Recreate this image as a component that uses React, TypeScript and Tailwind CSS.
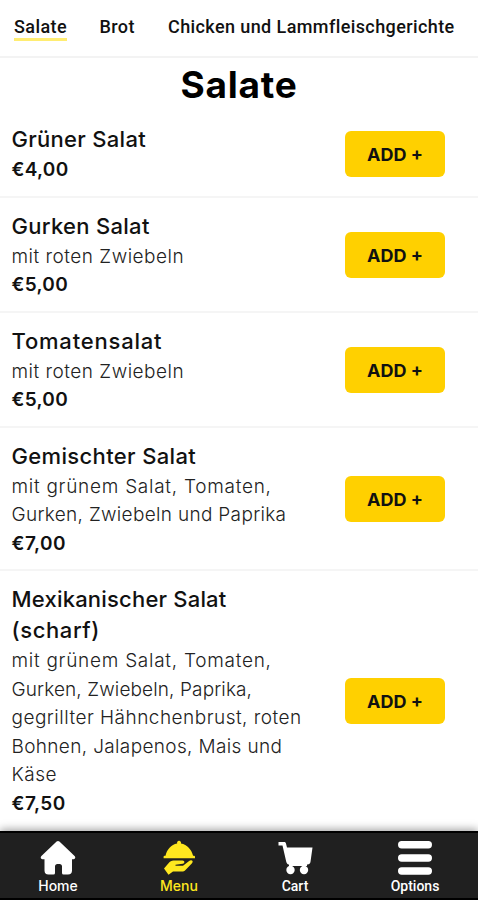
import type { ReactNode } from 'react';
import clsx from 'clsx';

interface Line {
  text: string;
  tracking: string;
}

interface MenuItem {
  name: Line[];
  description: Line[];
  price: Line;
}

const categories = [
  { label: 'Salate', width: 'w-[53px]', active: true },
  { label: 'Brot', width: 'w-[36px]', active: false },
  { label: 'Chicken und Lammfleischgerichte', width: 'w-[288px]', active: false },
];

const items: MenuItem[] = [
  {
    name: [{ text: 'Grüner Salat', tracking: 'tracking-[0.3px]' }],
    description: [],
    price: { text: '€4,00', tracking: 'tracking-[0.3px]' },
  },
  {
    name: [{ text: 'Gurken Salat', tracking: 'tracking-[0.3px]' }],
    description: [{ text: 'mit roten Zwiebeln', tracking: 'tracking-[0.5px]' }],
    price: { text: '€5,00', tracking: 'tracking-[0.3px]' },
  },
  {
    name: [{ text: 'Tomatensalat', tracking: 'tracking-[0.8px]' }],
    description: [{ text: 'mit roten Zwiebeln', tracking: 'tracking-[0.5px]' }],
    price: { text: '€5,00', tracking: 'tracking-[0.3px]' },
  },
  {
    name: [{ text: 'Gemischter Salat', tracking: 'tracking-[0.35px]' }],
    description: [
      { text: 'mit grünem Salat, Tomaten,', tracking: 'tracking-[0.73px]' },
      { text: 'Gurken, Zwiebeln und Paprika', tracking: 'tracking-[0.32px]' },
    ],
    price: { text: '€7,00', tracking: 'tracking-[0.5px]' },
  },
  {
    name: [
      { text: 'Mexikanischer Salat', tracking: 'tracking-[0.2px]' },
      { text: '(scharf)', tracking: 'tracking-[0.6px]' },
    ],
    description: [
      { text: 'mit grünem Salat, Tomaten,', tracking: 'tracking-[0.73px]' },
      { text: 'Gurken, Zwiebeln, Paprika,', tracking: 'tracking-[0.12px]' },
      { text: 'gegrillter Hähnchenbrust, roten', tracking: 'tracking-[0.48px]' },
      { text: 'Bohnen, Jalapenos, Mais und', tracking: 'tracking-[0.35px]' },
      { text: 'Käse', tracking: 'tracking-[0.5px]' },
    ],
    price: { text: '€7,50', tracking: 'tracking-[0.5px]' },
  },
];

function HomeIcon() {
  return (
    <svg viewBox="0 0 36 36" className="h-9 w-9" fill="currentColor">
      <path d="M16.6 1.6a2 2 0 0 1 2.8 0L34.600 16c1.200 1.200.8 3.200-1 3.200H32v11.300a4 4 0 0 1-4 4h-4.500a1.500 1.500 0 0 1-1.500-1.500v-6.500a2.500 2.500 0 0 0-2.500-2.500h-2a2.500 2.500 0 0 0-2.500 2.500V33a1.500 1.500 0 0 1-1.500 1.500H8.500a4 4 0 0 1-4-4V19.200H2.400c-1.800 0-2.200-2-1-3.200z" />
    </svg>
  );
}

function DishIcon() {
  return (
    <svg viewBox="0 0 36 36" className="h-9 w-9" fill="currentColor">
      <path d="M18 .8a2 2 0 0 1 1.900 2.800c6.300 1.200 10.600 6 12.200 12.200h.9a1 1 0 0 1 1 1v1.400H2.600v-1.400a1 1 0 0 1 1-1h.9C6 9.600 10 4.800 16.200 3.600A2 2 0 0 1 18 .8z" />
      <path d="M3 28.500l4.500-5.300c1.500-1.700 3-2.700 5-2.700h9c2.400 0 2.600 3 .2 3.300l-7.200.9v1h7.500l5.800-4.500c2.700-2 5.200-.2 3.200 2.100l-6.500 6.800c-1 1-2.200 1.500-3.700 1.500H12l-4.500 3.200z" />
    </svg>
  );
}

function CartIcon() {
  return (
    <svg viewBox="0 0 36 36" className="h-9 w-9" fill="currentColor">
      <path d="M1.500 2h5.500c1 0 1.600.4 1.900 1.300L10 7.500h25.500l-2 14.300c-.3 1.800-1.300 2.700-3 2.700h-18c-1.700 0-2.700-.9-3.200-2.600L5.500 5.500h-4z" />
      <path d="M12 24h18v2H12z" />
      <circle cx="13.500" cy="30" r="4.200" />
      <circle cx="27" cy="30" r="4.200" />
    </svg>
  );
}

function BarsIcon() {
  return (
    <svg viewBox="0 0 36 36" className="h-9 w-9" fill="currentColor">
      <rect x="1" y="1" width="34" height="7.500" rx="3.700" />
      <rect x="1" y="14.200" width="34" height="7.500" rx="3.700" />
      <rect x="1" y="27.200" width="34" height="7.500" rx="3.700" />
    </svg>
  );
}

function CategoryTabs() {
  return (
    <nav className="flex h-[58px] shrink-0 items-start gap-[32.500px] border-b-2 border-[#f3f3f3] pt-4 pl-3.5 font-[Roboto,sans-serif] text-[18px] font-medium">
      {categories.map((category) => (
        <a
          key={category.label}
          className={clsx(
            'h-[25px] whitespace-nowrap leading-[22px] tracking-[0.400px]',
            category.width,
            category.active && 'border-b-[3px] border-[#ffed72]',
          )}
        >
          {category.label}
        </a>
      ))}
    </nav>
  );
}

function MenuRow({ item }: { item: MenuItem }) {
  return (
    <li className="flex items-center justify-between border-b-2 border-[#f5f5f5] pt-[13px] pr-[33px] pb-[11px] pl-[11.500px] last:border-b-0">
      <div className="whitespace-nowrap">
        {item.name.map((line) => (
          <h2 key={line.text} className={clsx('text-[22px] leading-[31px] font-medium', line.tracking)}>
            {line.text}
          </h2>
        ))}
        <div className="pt-px">
          {item.description.map((line) => (
            <p key={line.text} className={clsx('text-[19px] leading-[28.500px] font-light text-[#222]', line.tracking)}>
              {line.text}
            </p>
          ))}
          <p className={clsx('text-[19px] leading-[28.500px] font-semibold', item.price.tracking)}>
            {item.price.text}
          </p>
        </div>
      </div>
      <button className="h-[46px] w-[100px] shrink-0 rounded-md bg-[#ffd000] text-[18px] font-bold">ADD +</button>
    </li>
  );
}

interface NavItemProps {
  label: string;
  className?: string;
  children: ReactNode;
}

function NavItem({ label, className, children }: NavItemProps) {
  return (
    <a className={clsx('flex w-[60px] flex-col items-center', className)}>
      {children}
      <span className="pt-px text-[14px] leading-[18px] font-medium">{label}</span>
    </a>
  );
}

export default function App() {
  return (
    <div className="flex h-[900px] w-[478px] flex-col overflow-hidden bg-white font-[Inter,sans-serif] text-[#111]">
      <CategoryTabs />
      <h1 className="h-[53px] shrink-0 text-center text-[37px] leading-[53px] font-bold tracking-[0.800px] text-black">
        Salate
      </h1>
      <ul className="min-h-0 flex-1">
        {items.map((item) => (
          <MenuRow key={item.name[0].text} item={item} />
        ))}
      </ul>
      <nav className="relative flex h-[69px] shrink-0 border-y-2 border-black bg-[#202020] pt-[7px] pl-7 text-white shadow-[0_-2px_8px_rgba(0,0,0,0.350)]">
        <NavItem label="Home">
          <HomeIcon />
        </NavItem>
        <NavItem label="Menu" className="ml-[61px] text-[#ffe81f]">
          <DishIcon />
        </NavItem>
        <NavItem label="Cart" className="ml-14 font-[Roboto,sans-serif]">
          <CartIcon />
        </NavItem>
        <NavItem label="Options" className="ml-[60px] font-[Roboto,sans-serif]">
          <BarsIcon />
        </NavItem>
      </nav>
    </div>
  );
}
